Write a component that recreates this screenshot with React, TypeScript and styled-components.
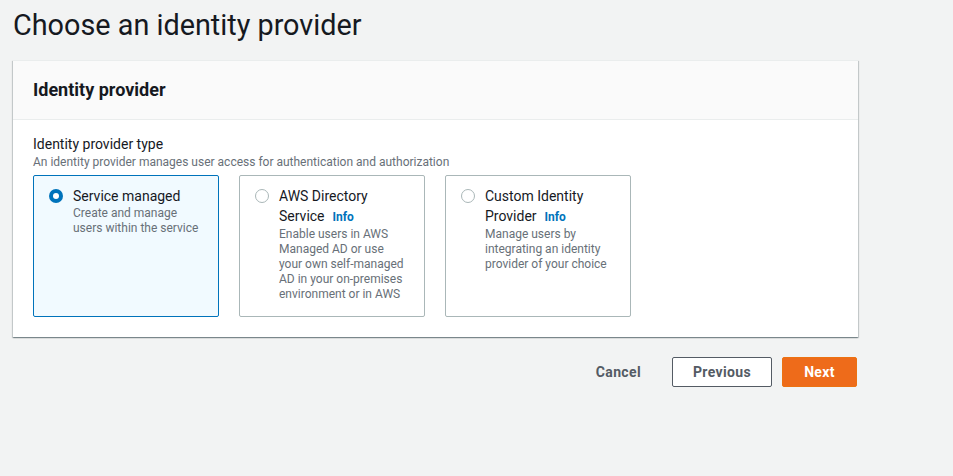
import React from "react";
import styled, { createGlobalStyle } from "styled-components";

const Global = createGlobalStyle`
  html, body { margin: 0; padding: 0; background: #f2f3f3; }
  body { font-family: Roboto, "Open Sans", Arial, sans-serif; color: #16191f; }
  * { box-sizing: border-box; }
`;

const Page = styled.div`
  width: 953px;
  min-height: 476px;
  padding: 7px 95px 0 13px;
  background: #f2f3f3;
`;

const Title = styled.h1`
  margin: 0 0 17px 0;
  font-size: 28.8px;
  line-height: 36px;
  font-weight: 400;
  color: #16191f;
`;

const Container = styled.section`
  background: #fff;
  border-top: 1px solid #eaeded;
  box-shadow: 0 1px 1px 0 rgba(0, 28, 36, 0.3), 1px 1px 1px 0 rgba(0, 28, 36, 0.15),
    -1px 1px 1px 0 rgba(0, 28, 36, 0.15);
`;

const Header = styled.header`
  background: #fafafa;
  border-bottom: 1px solid #eaeded;
  padding: 18px 20px;
`;

const HeaderTitle = styled.h2`
  margin: 0;
  font-size: 18px;
  line-height: 22px;
  font-weight: 700;
`;

const Body = styled.div`
  padding: 14px 20px 20px;
`;

const Label = styled.div`
  font-size: 14px;
  line-height: 20px;
`;

const Description = styled.div`
  font-size: 12px;
  line-height: 16px;
  color: #687078;
`;

const Tiles = styled.div`
  display: flex;
  gap: 20px;
  margin-top: 5px;
`;

const Tile = styled.label<{ $selected?: boolean }>`
  width: 186px;
  display: flex;
  gap: 10px;
  padding: 10px 15px 14px;
  border: 1px solid ${(p) => (p.$selected ? "#0073bb" : "#aab7b8")};
  background: ${(p) => (p.$selected ? "#f1faff" : "#fff")};
  border-radius: 2px;
  cursor: pointer;
`;

const Radio = styled.span<{ $checked?: boolean }>`
  flex: none;
  width: 14px;
  height: 14px;
  margin-top: 3px;
  border-radius: 50%;
  background: ${(p) => (p.$checked ? "#0073bb" : "#fff")};
  border: ${(p) => (p.$checked ? "none" : "1px solid #aab7b8")};
  display: flex;
  align-items: center;
  justify-content: center;
  &::after {
    content: "";
    display: ${(p) => (p.$checked ? "block" : "none")};
    width: 6px;
    height: 6px;
    border-radius: 50%;
    background: #fff;
  }
`;

const TileText = styled.div`
  min-width: 0;
  flex: 1;
`;

const TileTitle = styled.div`
  font-size: 14px;
  line-height: 20px;
  color: #16191f;
`;

const Info = styled.a`
  margin-left: 8px;
  font-size: 12px;
  font-weight: 700;
  color: #0073bb;
  text-decoration: none;
`;

const TileDesc = styled.div`
  font-size: 12px;
  line-height: 15px;
  color: #687078;
`;

const Actions = styled.div`
  display: flex;
  justify-content: flex-end;
  gap: 10px;
  margin-top: 20px;
  margin-right: 1px;
`;

const Button = styled.button<{ $variant: "link" | "normal" | "primary" }>`
  height: 30px;
  padding: 0 20px;
  font-family: inherit;
  font-size: 14px;
  font-weight: 700;
  border-radius: 2px;
  cursor: pointer;
  letter-spacing: 0.35px;
  border: 1px solid
    ${(p) => (p.$variant === "normal" ? "#545b64" : p.$variant === "primary" ? "#ec7211" : "transparent")};
  background: ${(p) => (p.$variant === "primary" ? "#ee6b1a" : p.$variant === "normal" ? "#fff" : "transparent")};
  color: ${(p) => (p.$variant === "primary" ? "#fff" : "#545b64")};
  min-width: ${(p) => (p.$variant === "normal" ? "100px" : p.$variant === "primary" ? "75px" : "auto")};
`;

type Option = { title: string; desc: string; info?: boolean; selected?: boolean };

const options: Option[] = [
  { title: "Service managed", desc: "Create and manage users within the service", selected: true },
  {
    title: "AWS Directory Service",
    desc: "Enable users in AWS Managed AD or use your own self-managed AD in your on-premises environment or in AWS",
    info: true,
  },
  {
    title: "Custom Identity Provider",
    desc: "Manage users by integrating an identity provider of your choice",
    info: true,
  },
];

export default function App() {
  return (
    <Page>
      <Global />
      <Title>Choose an identity provider</Title>
      <Container>
        <Header>
          <HeaderTitle>Identity provider</HeaderTitle>
        </Header>
        <Body>
          <Label>Identity provider type</Label>
          <Description>An identity provider manages user access for authentication and authorization</Description>
          <Tiles>
            {options.map((o) => (
              <Tile key={o.title} $selected={o.selected}>
                <Radio $checked={o.selected} />
                <TileText>
                  <TileTitle>
                    {o.title}
                    {o.info && <Info href="#">Info</Info>}
                  </TileTitle>
                  <TileDesc>{o.desc}</TileDesc>
                </TileText>
              </Tile>
            ))}
          </Tiles>
        </Body>
      </Container>
      <Actions>
        <Button $variant="link">Cancel</Button>
        <Button $variant="normal">Previous</Button>
        <Button $variant="primary">Next</Button>
      </Actions>
    </Page>
  );
}
